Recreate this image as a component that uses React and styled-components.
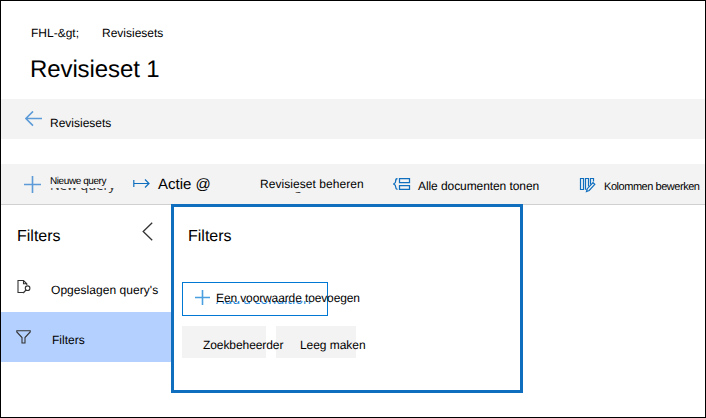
import React from "react";
import styled, { createGlobalStyle } from "styled-components";

const GlobalStyle = createGlobalStyle`
  * { box-sizing: border-box; }
  body { margin: 0; background: #fff; }
`;

const Frame = styled.div`
  display: flex;
  flex-direction: column;
  width: 706px;
  height: 418px;
  border: 1px solid #000;
  background: #fff;
  color: #000;
  font-family: "Liberation Sans", Arial, sans-serif;
  overflow: hidden;
`;

const Text = styled.span`
  position: relative;
  z-index: 1;
  flex: none;
  font-size: ${(p) => p.$size || 12}px;
  letter-spacing: ${(p) => p.$track || 0}px;
  line-height: 20px;
  white-space: nowrap;
  text-rendering: geometricPrecision;
`;

const Header = styled.header`
  height: 98px;
  padding: 22px 0 0 30px;
`;

const Breadcrumbs = styled.nav`
  display: flex;
  height: 20px;
`;

const Crumb = styled.div`
  display: flex;
  width: 71px;
`;

const Title = styled.h1`
  margin: 13px 0 0 -1px;
  font-size: 24px;
  font-weight: 400;
  line-height: 28px;
  letter-spacing: ${(p) => p.$track}px;
  text-rendering: geometricPrecision;
`;

const BackBar = styled.div`
  display: flex;
  height: 40px;
  padding: 12px 0 0 24px;
  background: #f3f3f3;
`;

const BackLabel = styled.div`
  display: flex;
  padding: 2px 0 0 8px;
`;

const Toolbar = styled.div`
  display: flex;
  height: 41px;
  margin-top: 25px;
  padding-left: 23px;
  background: #f3f3f3;
  border-bottom: 1px solid #d0d0d0;
`;

const Command = styled.div`
  display: flex;
  flex: none;
  width: ${(p) => p.$width}px;
`;

const IconSlot = styled.div`
  flex: none;
  width: ${(p) => p.$width}px;
  padding-top: ${(p) => p.$top}px;
  line-height: 0;
`;

const CommandLabel = styled.div`
  position: relative;
  display: flex;
  height: 40px;
  padding-top: ${(p) => p.$top}px;
`;

const Underprint = styled.span`
  position: absolute;
  left: ${(p) => p.$x}px;
  top: ${(p) => p.$y}px;
  color: ${(p) => p.$color || "#333"};
  font-family: "Open Sans", "Noto Sans", sans-serif;
  font-size: ${(p) => p.$size}px;
  line-height: 20px;
  letter-spacing: ${(p) => p.$track || 0}px;
  white-space: nowrap;
  clip-path: inset(${(p) => p.$from}px 0 ${(p) => p.$below || 0}px 0);
`;

const Body = styled.main`
  display: flex;
  flex: 1;
  margin-top: -1px;
`;

const Sidebar = styled.aside`
  width: 170px;
`;

const SidebarHead = styled.div`
  display: flex;
  justify-content: space-between;
  height: 58px;
  padding: 18px 18px 0 16px;
`;

const SideItem = styled.div`
  display: flex;
  height: 50px;
  padding-left: 15px;
  background: ${(p) => (p.$active ? "#b4d0ff" : "transparent")};
`;

const SideLabel = styled.div`
  padding: ${(p) => p.$pad};
  display: flex;
`;

const Panel = styled.section`
  width: 352px;
  height: 189px;
  padding: 20px 0 0 8px;
  border: 3px solid #106ebe;
  background: #fff;
`;

const PanelTitle = styled.div`
  display: flex;
  height: 55px;
  padding-left: 6px;
`;

const AddButton = styled.div`
  display: flex;
  width: 146px;
  height: 34px;
  padding-left: 12px;
  border: 1px solid #0078d4;
`;

const Actions = styled.div`
  display: flex;
  gap: 10px;
  margin-top: 10px;
`;

const Action = styled.div`
  display: flex;
  width: ${(p) => p.$width}px;
  height: 32px;
  padding: 9px 0 0 ${(p) => p.$inset}px;
  background: #f3f3f3;
`;

const Svg = ({ w, h, color = "#106ebe", sw = 1, children }) => (
  <svg width={w} height={h} viewBox={`0 0 ${w} ${h}`} fill="none" stroke={color} strokeWidth={sw}>
    {children}
  </svg>
);

const Plus = ({ size, color }) => (
  <Svg w={size} h={size} color={color} sw={1.6}>
    <path d={`M${size / 2} 0V${size}M0 ${size / 2}H${size}`} />
  </Svg>
);

export default function App() {
  return (
    <Frame>
      <GlobalStyle />
      <Header>
        <Breadcrumbs>
          <Crumb><Text>FHL-&amp;gt;</Text></Crumb>
          <Text>Revisiesets</Text>
        </Breadcrumbs>
        <Title $track={-0.1}>Revisieset 1</Title>
      </Header>

      <BackBar>
        <Svg w={17} h={16} color="#5c9bd8" sw={1.6}>
          <path d="M17 7.5H1M8 .4L.9 7.5L8 14.6" />
        </Svg>
        <BackLabel><Text>Revisiesets</Text></BackLabel>
      </BackBar>

      <Toolbar>
        <Command $width={109}>
          <IconSlot $width={26} $top={12}><Plus size={17} color="#5c9bd8" /></IconSlot>
          <CommandLabel $top={8}>
            <Underprint $x={0} $y={11} $size={13} $from={13} $track={-0.05} aria-hidden="true">New query</Underprint>
            <Text $size={10} $track={-0.42}>Nieuwe query</Text>
          </CommandLabel>
        </Command>
        <Command $width={127}>
          <IconSlot $width={25} $top={14}>
            <Svg w={17} h={11} sw={1.2}><path d="M.8 2V9M1 5.5H16M12 1.5L16 5.5L12 9.5" /></Svg>
          </IconSlot>
          <CommandLabel $top={11}><Text $size={15}>Actie @</Text></CommandLabel>
        </Command>
        <Command $width={133}>
          <CommandLabel $top={10}>
            <Underprint $x={35} $y={12} $size={12} $from={16} aria-hidden="true">g</Underprint>
            <Text $track={0.05}>Revisieset beheren</Text>
          </CommandLabel>
        </Command>
        <Command $width={186}>
          <IconSlot $width={25} $top={14}>
            <Svg w={18} h={12} sw={1.25}>
              <path d="M4.5 .6C2.7 .6 2.7 1.5 2.7 3C2.7 4.8 2 5.5 .6 6C2 6.5 2.7 7.2 2.7 9C2.7 10.5 2.7 11.4 4.5 11.4" />
              <path d="M6.5.6H16.5V4.5H6.5ZM6.5 7.5H16.5V11.4H6.5Z" />
            </Svg>
          </IconSlot>
          <CommandLabel $top={12}><Text $track={-0.08}>Alle documenten tonen</Text></CommandLabel>
        </Command>
        <Command $width={121}>
          <IconSlot $width={25} $top={13}>
            <Svg w={17} h={16} sw={1.2}>
              <path d="M1.5 1.5H4.5V12.5H1.5ZM6.5 12.5V1.5H9.5V9.5M6.5 12.5H7.5M11.5 7.5V1.5H14.5V4.5" />
              <path d="M7.5 14.5L8.3 11.7L14 5.7L15.8 7.3L10.2 13.5Z" />
            </Svg>
          </IconSlot>
          <CommandLabel $top={13}><Text $size={11} $track={-0.46}>Kolommen bewerken</Text></CommandLabel>
        </Command>
      </Toolbar>

      <Body>
        <Sidebar>
          <SidebarHead>
            <SideLabel $pad="5px 0 0"><Text $size={16}>Filters</Text></SideLabel>
            <Svg w={11} h={19} color="#333" sw={1.3}><path d="M10.2 .8L1.2 9.5L10.2 18.2" /></Svg>
          </SidebarHead>
          <SideItem>
            <IconSlot $width={35} $top={17}>
              <Svg w={16} h={16} color="#333" sw={1.1}>
                <path d="M7.5 13.5H2V1.5H7.5L10.8 4.8V6M7.5 1.5V4.8H10.8" />
                <circle cx="11.6" cy="9.2" r="2.3" />
                <path d="M10 11L7.2 14" />
              </Svg>
            </IconSlot>
            <SideLabel $pad="18px 0 0"><Text $track={0.05}>Opgeslagen query's</Text></SideLabel>
          </SideItem>
          <SideItem $active>
            <IconSlot $width={36} $top={18}>
              <Svg w={15} h={14} color="#333" sw={1.1}>
                <path d="M.8.7H14.2V2L9 7.5V13H6V7.5L.8 2Z" />
              </Svg>
            </IconSlot>
            <SideLabel $pad="18px 0 0"><Text>Filters</Text></SideLabel>
          </SideItem>
        </Sidebar>

        <Panel>
          <PanelTitle><Text $size={16}>Filters</Text></PanelTitle>
          <AddButton>
            <IconSlot $width={21} $top={7}><Plus size={15} color="#4a9fe0" /></IconSlot>
            <CommandLabel $top={5}>
              <Underprint $x={0} $y={6} $size={13} $from={12} $below={4} $color="#1683d8" aria-hidden="true">Add a condition</Underprint>
              <Text $track={-0.12}>Een voorwaarde toevoegen</Text>
            </CommandLabel>
          </AddButton>
          <Actions>
            <Action $width={84} $inset={21}><Text $track={-0.08}>Zoekbeheerder</Text></Action>
            <Action $width={80} $inset={24}><Text $track={-0.05}>Leeg maken</Text></Action>
          </Actions>
        </Panel>
      </Body>
    </Frame>
  );
}
